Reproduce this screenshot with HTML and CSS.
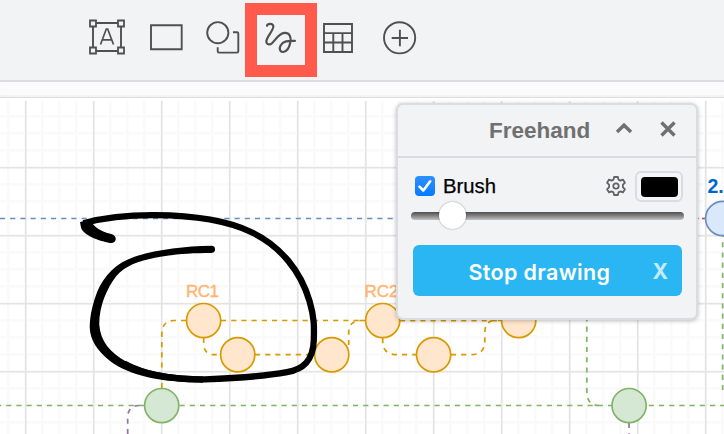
FILE: index.html
```html
<!DOCTYPE html>
<html lang="en">
<head>
<meta charset="utf-8">
<title>Freehand drawing</title>
<link rel="stylesheet" href="styles.css">
</head>
<body>
<div class="app">
  <header class="toolbar">
    <button class="tool" aria-label="Text">
      <svg width="38" height="38" viewBox="0 0 38 38"><path class="ln" d="M5 5H33V33H5Z"/><path class="ln thin" d="M12.5 26.5 18.3 11H19.7L25.5 26.5M14.5 21.8H23.5"/><g class="knob"><path d="M2 2.5h6v6H2zM30 2.5h6v6h-6zM2 29.5h6v6H2zM30 29.5h6v6h-6z"/></g></svg>
    </button>
    <button class="tool" aria-label="Rectangle">
      <svg width="36" height="38" viewBox="0 0 36 38"><path class="ln" d="M3 7.2H33.7V31.3H3Z"/></svg>
    </button>
    <button class="tool" aria-label="Shapes">
      <svg width="38" height="38" viewBox="0 0 38 38"><circle class="ln" cx="13.8" cy="14.7" r="10.6"/><path class="ln" d="M29 14.2H33Q34.3 14.2 34.3 15.5V33.3Q34.3 34.6 33 34.6H15Q13.7 34.6 13.7 33.3V29.2"/></svg>
    </button>
    <button class="tool selected" aria-label="Freehand">
      <svg width="48" height="50" viewBox="257 15 48 50"><path class="ln scribble" d="M267 25.7C267.5 23.4 272.6 23 273.3 26C274 30 267 36 266.4 41C266 44.6 269.7 45.4 272 43.2C276 39.6 278.5 33.5 284.5 32.9C289.5 32.5 291.4 37 290.4 42C289.3 47.8 286.5 51.6 283.2 52C279.5 52.3 279.2 48 280.6 45.4C283.3 40.5 288.5 40.8 295 40.8"/></svg>
    </button>
    <button class="tool" aria-label="Table">
      <svg width="32" height="32" viewBox="322 22 32 32"><path class="ln" d="M324 24H352V52H324Z"/><path class="ln" d="M324 33.1H352M324 42.5H352M333.3 33V52M342.5 33V52"/></svg>
    </button>
    <button class="tool" aria-label="Insert">
      <svg width="36" height="36" viewBox="381.5 20 36 36"><circle class="ln" cx="399.1" cy="37.8" r="15.6"/><path class="ln" d="M391.2 38H407.5M399.4 29.8V46.2"/></svg>
    </button>
  </header>
  <div class="ruler"></div>
  <main class="canvas">
    <svg width="724" height="336" viewBox="0 98 724 336">
      <defs>
        <pattern id="minor" x="7" y="115" width="17" height="17" patternUnits="userSpaceOnUse"><path class="minor" d="M0 1.3H17M1.3 0V17"/></pattern>
        <pattern id="major" x="25" y="167" width="68" height="68" patternUnits="userSpaceOnUse"><path class="major" d="M0 .8H68M.8 0V68"/></pattern>
      </defs>
      <rect y="101" width="724" height="333" fill="url(#minor)"/>
      <rect y="101" width="724" height="333" fill="url(#major)"/>
      <path class="edge blue" d="M0 218.5H700"/>
      <path class="edge red" d="M702 218.5H706"/>
      <path class="edge green" d="M0 405.5H724M586.8 300V391Q586.8 405.5 599 405.5M722.7 236V395" stroke-dashoffset="4"/>
      <path class="edge purple" d="M127.7 434V418Q127.7 405.5 139 405.5M629 423V434"/>
      <path class="edge orange" d="M161.8 388V335Q161.8 320.5 174 320.5H186M221 320.5H365M203.7 338V343Q203.7 354.7 214 354.7H220M255 354.7H314M348.7 345V333Q348.7 320.5 361 320.5H365M382.7 338V341Q382.7 354.7 397 354.7H416M451 354.7H471Q484.8 354.7 484.8 341V333Q484.8 320.5 495 320.5H502M400 320.7H502"/>
      <g class="node orange">
        <circle cx="203.6" cy="320.6" r="17.1"/><circle cx="237.7" cy="354.7" r="17.1"/><circle cx="331.7" cy="354.7" r="17.1"/><circle cx="382.7" cy="320.6" r="17.1"/><circle cx="433.6" cy="354.7" r="17.1"/><circle cx="518.7" cy="320.6" r="17.1"/>
      </g>
      <g class="node green"><circle cx="161.7" cy="405.6" r="17.1"/><circle cx="629.1" cy="405.6" r="17.1"/></g>
      <g class="node blue"><circle cx="722.7" cy="218.5" r="17.1"/></g>
      <text class="rc" x="186" y="297" textLength="33">RC1</text>
      <text class="rc" x="364.5" y="297" textLength="34">RC2</text>
      <text class="version" x="707.5" y="192.5">2.</text>
      <path class="ink" d="M83.5 223.2C103 218 127 215 155 215.2C194 215.5 228 221 251 232C281 246 301 272 309.5 301C314.5 318 314.2 327 313.8 340C313.2 361 303 369 287 372.2C267 375.8 230 378.5 205 379.4C173 379.8 146 375.5 124 363.5"/>
      <path class="ink-fill" d="M80 222.2L89 218.9L93 224.3C97 229.5 105 232.5 112 234.3C118 236.5 116.5 244 110 243C98 240.7 83 235 81 227.500Z"/>
      <path class="ink-fill" d="M211.500 245.800C184 246.300 157 249.500 134.500 256.800C116 263 104 276 97.500 291C93 303 90 314 89.700 327C90 341 98 351 110 361C130 376 160 382 203 382.700V376.400C165 375.500 143 370.500 126 361.500C110 352.500 100.500 341 99.300 325C98.800 307 107 288 116 276.500C125 266 137 261.500 155 257.800C175 254 190 252.900 211.500 252.900A3.550 3.550 0 0 0 211.500 245.800Z"/>
    </svg>
    <section class="panel">
      <div class="panel-head">
        <span class="title">Freehand</span>
        <svg class="collapse" width="18" height="12" viewBox="0 0 18 12"><path d="M2 10 9 3.200 16 10"/></svg>
        <svg class="close" width="16" height="16" viewBox="0 0 16 16"><path d="M1.500 1.500 14.500 14.500M14.500 1.500 1.500 14.500"/></svg>
      </div>
      <div class="brush-row">
        <span class="check"><svg width="20" height="20" viewBox="0 0 20 20"><path d="M4.500 10.700 8.300 14.500 15.200 5.300"/></svg></span>
        <span class="brush">Brush</span>
        <svg class="gear" width="22" height="22" viewBox="-11 -11 22 22"><path d="M-1.900-9H1.900L2.500-6.400 4.400-5.400 6.900-6.400 8.900-3.200 6.900-1.300V1.300L8.900 3.200 6.900 6.400 4.400 5.400 2.500 6.400 1.900 9H-1.900L-2.500 6.400-4.400 5.400-6.900 6.400-8.900 3.200-6.900 1.300V-1.300L-8.900-3.200-6.900-6.400-4.400-5.400-2.500-6.400Z"/><circle r="2.700"/></svg>
        <span class="swatch"><i></i></span>
      </div>
      <div class="slider"><span class="thumb"></span></div>
      <button class="stop"><span class="label">Stop drawing</span><span class="x">X</span></button>
    </section>
  </main>
</div>
</body>
</html>
```
FILE: styles.css
```css
* { box-sizing: border-box; }
body { margin: 0; background: #fff; font-family: "Liberation Sans", Arial, sans-serif; }
.app { width: 724px; height: 434px; overflow: hidden; display: flex; flex-direction: column; }
button { border: 0; padding: 0; background: none; font: inherit; }
.toolbar { height: 82px; flex: none; display: flex; align-items: flex-start; background: #f1f3f5; border-bottom: 2px solid #dadce0; padding: 3px 0 0 88px; }
.tool { display: flex; margin-top: 15px; }
.tool svg { display: block; }
.tool:nth-child(2) { margin-left: 22px; }
.tool:nth-child(3) { margin-left: 20px; }
.tool.selected { margin: 0 0 0 3px; border: 12px solid #ff5a4c; }
.tool:nth-child(5) { margin: 19px 0 0 5px; }
.tool:nth-child(6) { margin: 17px 0 0 27.500px; }
.ln { fill: none; stroke: #505050; stroke-width: 1.900; }
.thin { stroke-width: 1.700; }
.scribble { stroke-width: 2.200; stroke-linecap: round; }
.knob { fill: #f1f3f5; stroke: #505050; stroke-width: 1.800; }
.ruler { height: 16px; flex: none; background: #fbfbfb; border-bottom: 1px solid #dedede; box-shadow: inset 0 -2px 1px #f2f2f2; }
.canvas { position: relative; height: 336px; flex: none; }
.canvas > svg { display: block; }
.minor { stroke: #fafafa; stroke-width: 2.600; }
.major { stroke: #e4e4e4; stroke-width: 1.600; }
.edge { fill: none; stroke-width: 1.700; stroke-dasharray: 5.100 5.100; }
.edge.blue { stroke: #6c8ebf; }
.edge.red { stroke: #c4504c; }
.edge.green { stroke: #82b366; }
.edge.purple { stroke: #9673a6; }
.edge.orange { stroke: #d79b00; }
.node { stroke-width: 1.700; }
.node.orange { fill: #ffe6cc; stroke: #d79b00; }
.node.green { fill: #d5e8d4; stroke: #82b366; }
.node.blue { fill: #dae8fc; stroke: #6c8ebf; }
.rc { font-size: 17px; fill: #ffb570; stroke: #ffb570; stroke-width: .4; }
.version { font-size: 19.500px; font-weight: bold; fill: #0066cc; }
.ink { fill: none; stroke: #000; stroke-width: 6.300; stroke-linejoin: round; }
.panel { position: absolute; left: 396px; top: 5px; width: 302px; height: 217px; background: #f1f3f5; border: 2px solid #dadce0; border-radius: 7px; box-shadow: 0 1px 4px rgba(0,0,0,.25); }
.panel-head { height: 53px; display: flex; align-items: center; border-bottom: 2px solid #dadce0; padding-left: 91px; }
.title { width: 100px; font-size: 22.500px; font-weight: bold; color: #707070; }
.panel-head svg { fill: none; stroke: #707070; stroke-width: 3.400; }
.collapse { margin-left: 26px; margin-top: -6px; }
.close { margin-left: 27px; margin-top: -4px; }
.brush-row { height: 56px; display: flex; align-items: center; padding: 0 13px 0 17px; }
.check { width: 20px; height: 20px; border-radius: 4px; background: linear-gradient(#2e90ff, #087aff); }
.check svg { display: block; fill: none; stroke: #fff; stroke-width: 2.600; stroke-linecap: round; stroke-linejoin: round; }
.brush { margin-left: 8px; font-size: 20.300px; color: #000; -webkit-text-stroke: .25px #000; }
.gear { margin-left: auto; fill: none; stroke: #606368; stroke-width: 1.800; stroke-linejoin: round; }
.swatch { margin-left: 8px; width: 48px; height: 31px; padding: 4px 3.500px; border: 2px solid #dadce0; border-radius: 6px; background: #f3f5f6; }
.swatch i { display: block; width: 37px; height: 20px; border-radius: 4px; background: #000; }
.slider { width: 273px; height: 8px; margin: -2px 0 0 13px; border-radius: 4px; background: linear-gradient(#4e4e4e, #858585 50%, #c4c4c4); }
.thumb { display: block; width: 27px; height: 27px; position: relative; left: 28px; top: -10px; border-radius: 50%; background: #fff; box-shadow: 0 0 2px rgba(0,0,0,.4); }
.stop { width: 269px; height: 51px; margin: 25px 0 0 15px; padding: 2px 14px 0 55.500px; display: flex; align-items: center; justify-content: space-between; border-radius: 6px; background: #29b6f2; color: #fff; font: 600 21.500px Inter, sans-serif; }
.label { letter-spacing: .35px; }
.stop .x { color: #c4eafb; font-size: 21px; font-weight: 700; }
```
